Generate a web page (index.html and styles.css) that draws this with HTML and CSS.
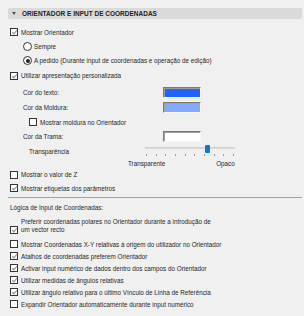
FILE: index.html
```html
<!DOCTYPE html>
<html lang="pt">
<head>
  <meta charset="UTF-8" />
  <title>Orientador e Input de Coordenadas</title>
  <link rel="stylesheet" href="styles.css">
</head>
<body>
  <div class="panel">
    <div class="head"><span class="arrow"></span>ORIENTADOR E INPUT DE COORDENADAS</div>

    <div class="row first lv0"><span class="box on"></span>Mostrar Orientador</div>
    <div class="row h14 lv1"><span class="radio"></span>Sempre</div>
    <div class="row lv1"><span class="radio on"></span>A pedido (Durante input de coordenadas e operação de edição)</div>
    <div class="row lv0"><span class="box on"></span>Utilizar apresentação personalizada</div>

    <div class="row field gap"><span class="name">Cor do texto:</span><span class="swatch blue"></span></div>
    <div class="row field"><span class="name">Cor da Moldura:</span><span class="swatch light"></span></div>
    <div class="row h14 lv2"><span class="box"></span>Mostrar moldura no Orientador</div>
    <div class="row field"><span class="name">Cor da Trama:</span><span class="swatch white"></span></div>
    <div class="row h14 trans">
      <span class="name">Transparência</span>
      <div class="slider">
        <div class="track"><span class="thumb"></span></div>
        <div class="ticks">
          <i></i><i></i><i></i><i></i><i></i><i></i><i></i><i></i><i></i><i></i>
        </div>
      </div>
    </div>
    <div class="row ends"><span>Transparente</span><span>Opaco</span></div>

    <div class="row h13 lv0"><span class="box"></span>Mostrar o valor de Z</div>
    <div class="row h14 lv0"><span class="box on"></span>Mostrar etiquetas dos parâmetros</div>

    <div class="divider"></div>

    <div class="row title">Lógica de Input de Coordenadas:</div>
    <div class="row two lv0"><span class="box on"></span><span>Preferir coordenadas polares no Orientador durante a introdução de<br>um vector recto</span></div>
    <div class="row tight lv0"><span class="box"></span>Mostrar Coordenadas X-Y relativas à origem do utilizador no Orientador</div>
    <div class="row tight lv0"><span class="box on"></span>Atalhos de coordenadas preferem Orientador</div>
    <div class="row tight lv0"><span class="box on"></span>Activar input numérico de dados dentro dos campos do Orientador</div>
    <div class="row tight lv0"><span class="box on"></span>Utilizar medidas de ângulos relativas</div>
    <div class="row tight lv0"><span class="box on"></span>Utilizar ângulo relativo para o último Vínculo de Linha de Referência</div>
    <div class="row tight lv0"><span class="box"></span>Expandir Orientador automaticamente durante input numérico</div>
  </div>
</body>
</html>
```

FILE: styles.css
```css
* {
  box-sizing: border-box;
  margin: 0;
  padding: 0;
}
body {
  font-family: "Liberation Sans", Arial, sans-serif;
  font-size: 6.3px;
  background-color: #f0f0f0;
  color: #1e1e1e;
}
.panel {
  width: 304px;
  height: 316px;
  padding-top: 8px;
  overflow: hidden;
}
.head {
  margin: 0 2px 0 8px;
  height: 11px;
  background: #dadada;
  border-radius: 2px;
  display: flex;
  align-items: center;
  font-size: 6.5px;
  font-weight: bold;
  color: #222;
}
.arrow {
  width: 0;
  height: 0;
  margin: 0 6px 0 4px;
  border-left: 2px solid transparent;
  border-right: 2px solid transparent;
  border-top: 3px solid #555;
}
.row {
  display: flex;
  align-items: center;
  height: 15px;
  white-space: nowrap;
}
.row.first { margin-top: 6px; height: 14px; }
.row.h14 { height: 14px; }
.row.h13 { height: 13px; }
.row.tight { height: 12px; }
.row.gap { margin-top: 2px; }
.lv0 { padding-left: 10px; }
.lv1 { padding-left: 23px; }
.lv2 { padding-left: 29px; }

/* checkbox and radio */
.box {
  position: relative;
  width: 8px;
  height: 8px;
  border: 1px solid #333;
  background: #fff;
  margin-right: 3px;
  flex-shrink: 0;
}
.box.on::after {
  content: "";
  position: absolute;
  left: 2px;
  top: 0;
  width: 2px;
  height: 4px;
  border: solid #8a8a8a;
  border-width: 0 1px 1px 0;
  transform: rotate(40deg);
}
.radio {
  position: relative;
  width: 9px;
  height: 9px;
  border: 1px solid #333;
  border-radius: 50%;
  background: #fff;
  margin-right: 2px;
}
.radio.on::after {
  content: "";
  position: absolute;
  left: 1.5px;
  top: 1.5px;
  width: 4px;
  height: 4px;
  border-radius: 50%;
  background: #222;
}

/* colour fields */
.field { padding-left: 23px; }
.field .name { width: 140px; }
.swatch {
  width: 38px;
  height: 11px;
  border: 1px solid #f8f8f8;
  border-top-color: #7a7a7a;
  border-left-color: #7a7a7a;
  box-shadow: inset 1px 1px 0 #a0a0a0;
}
.swatch.blue { background: #1f63ff; }
.swatch.light { background: #84aaff; }
.swatch.white { background: #fff; }

/* transparency slider */
.trans { padding-left: 29px; }
.trans .name { width: 116px; }
.slider {
  width: 90px;
  align-self: flex-start;
  padding-top: 3px;
}
.track {
  position: relative;
  height: 2px;
  background: #dcdcdc;
  border-top: 1px solid #d0d0d0;
}
.thumb {
  position: absolute;
  left: 60px;
  top: -3px;
  width: 5px;
  height: 8px;
  background: #0a78d7;
  border-radius: 1px;
}
.ticks {
  display: flex;
  justify-content: space-between;
  padding: 0 1px;
  margin-top: 5px;
}
.ticks i {
  width: 1px;
  height: 2px;
  background: #9a9a9a;
}
.ends {
  height: 10px;
  padding-left: 128px;
}
.ends span:last-child { margin-left: 51px; }

.divider {
  margin: 2px 2px 0 8px;
  height: 1px;
  background: #a0a0a0;
}
.title {
  height: 16px;
  padding-left: 10px;
  margin-top: 1px;
}
.row.two {
  height: 16px;
  margin: 3px 0 4px;
  line-height: 8px;
  align-items: flex-end;
}
```
